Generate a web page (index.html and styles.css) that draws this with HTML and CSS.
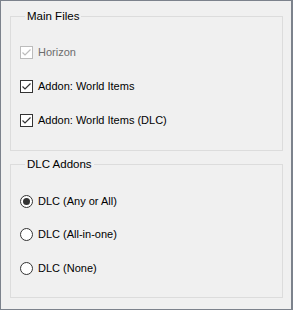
FILE: index.html
```html
<!DOCTYPE html>
<html>
<head>
<meta charset="utf-8">
<link rel="stylesheet" href="styles.css">
</head>
<body>
<div class="window">
  <fieldset class="group group-main">
    <legend>Main Files</legend>
    <div class="list list-checks">
      <div class="row disabled">
        <span class="check">
          <svg width="11" height="11" viewBox="0 0 11 11"><polyline points="1.5,5.5 4,8 9.5,2.5" fill="none" stroke="currentColor" stroke-width="1.2"/></svg>
        </span>
        <span class="label">Horizon</span>
      </div>
      <div class="row">
        <span class="check">
          <svg width="11" height="11" viewBox="0 0 11 11"><polyline points="1.5,5.5 4,8 9.5,2.5" fill="none" stroke="currentColor" stroke-width="1.2"/></svg>
        </span>
        <span class="label">Addon: World Items</span>
      </div>
      <div class="row">
        <span class="check">
          <svg width="11" height="11" viewBox="0 0 11 11"><polyline points="1.5,5.5 4,8 9.5,2.5" fill="none" stroke="currentColor" stroke-width="1.2"/></svg>
        </span>
        <span class="label">Addon: World Items (DLC)</span>
      </div>
    </div>
  </fieldset>
  <fieldset class="group group-dlc">
    <legend>DLC Addons</legend>
    <div class="list list-radios">
      <div class="row">
        <span class="radio selected"><span class="dot"></span></span>
        <span class="label">DLC (Any or All)</span>
      </div>
      <div class="row">
        <span class="radio"></span>
        <span class="label">DLC (All-in-one)</span>
      </div>
      <div class="row">
        <span class="radio"></span>
        <span class="label">DLC (None)</span>
      </div>
    </div>
  </fieldset>
</div>
</body>
</html>
```

FILE: styles.css
```css
html, body {
  margin: 0;
  padding: 0;
  background: #f0f0f0;
}

.window {
  box-sizing: border-box;
  width: 293px;
  height: 310px;
  border: 1px solid #7c828c;
  border-right-width: 2px;
  background: #f0f0f0;
  padding: 8px 8px 0 9px;
  font-family: "Liberation Sans", Arial, sans-serif;
  font-size: 11px;
  color: #000;
}

.group {
  box-sizing: border-box;
  margin: 0;
  border: 1px solid #dcdcdc;
  padding: 0 0 0 9px;
  min-width: 0;
}

.group legend {
  margin-left: 5px;
  padding: 0 2px;
  line-height: 15px;
  font-size: 11.5px;
}

.group-main {
  height: 142px;
  padding-top: 22px;
}

.group-dlc {
  height: 141px;
  margin-top: 6px;
  padding-top: 22.5px;
}

.list {
  display: flex;
  flex-direction: column;
}

.list-checks {
  gap: 21px;
}

.list-radios {
  gap: 20.5px;
}

.row {
  display: flex;
  align-items: center;
  gap: 5px;
  height: 13px;
}

.label {
  line-height: 13px;
  white-space: nowrap;
}

.check {
  box-sizing: border-box;
  width: 13px;
  height: 13px;
  border: 1px solid #333333;
  background: #ffffff;
  color: #333333;
  display: flex;
  flex: none;
}

.row.disabled .check {
  border-color: #bcbcbc;
  color: #bcbcbc;
}

.row.disabled .label {
  color: #6d6d6d;
}

.radio {
  box-sizing: border-box;
  width: 13px;
  height: 13px;
  border: 1px solid #333333;
  border-radius: 50%;
  background: #ffffff;
  display: flex;
  align-items: center;
  justify-content: center;
  flex: none;
}

.radio .dot {
  width: 7px;
  height: 7px;
  border-radius: 50%;
  background: #333333;
}
```
